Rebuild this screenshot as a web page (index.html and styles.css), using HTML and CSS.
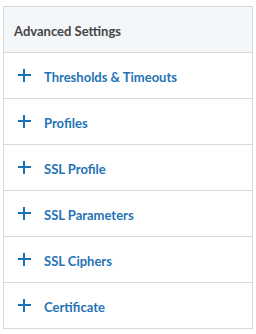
FILE: index.html
```html
<!DOCTYPE html>
<html lang="en">
<head>
  <meta charset="UTF-8" />
  <title>Advanced Settings</title>
  <link rel="stylesheet" href="styles.css">
</head>
<body>
  <div class="panel">
    <div class="panel-header">Advanced Settings</div>
    <ul class="panel-list">
      <li class="panel-item"><span class="plus"></span>Thresholds &amp; Timeouts</li>
      <li class="panel-item"><span class="plus"></span>Profiles</li>
      <li class="panel-item"><span class="plus"></span>SSL Profile</li>
      <li class="panel-item"><span class="plus"></span>SSL Parameters</li>
      <li class="panel-item"><span class="plus"></span>SSL Ciphers</li>
      <li class="panel-item"><span class="plus"></span>Certificate</li>
    </ul>
  </div>
</body>
</html>
```

FILE: styles.css
```css
body {
  margin: 0;
  padding: 6px 3px;
  background-color: #ffffff;
  font-family: Lato, "Open Sans", sans-serif;
}

.panel {
  width: 248px;
  border: 1px solid #d9d9d9;
}

.panel-header {
  background-color: #f4f7fa;
  height: 42px;
  display: flex;
  align-items: center;
  padding: 3px 0 0 10px;
  font-size: 13px;
  font-weight: 700;
  color: #444444;
  border-bottom: 1px solid #d9d9d9;
}

.panel-list {
  list-style: none;
  margin: 0;
  padding: 0;
}

.panel-item {
  height: 42px;
  display: flex;
  align-items: center;
  padding: 3px 0 0 14px;
  font-size: 13px;
  font-weight: 700;
  color: #1f73b7;
  border-bottom: 1px solid #d9d9d9;
}

.panel-item:last-child {
  border-bottom: none;
}

.plus {
  position: relative;
  width: 13px;
  height: 13px;
  margin: -3px 13px 0 0;
}

.plus::before,
.plus::after {
  content: "";
  position: absolute;
  background-color: #1773b3;
}

.plus::before {
  left: 0;
  top: 5px;
  width: 13px;
  height: 2px;
}

.plus::after {
  left: 5px;
  top: 0;
  width: 2px;
  height: 13px;
}
```
